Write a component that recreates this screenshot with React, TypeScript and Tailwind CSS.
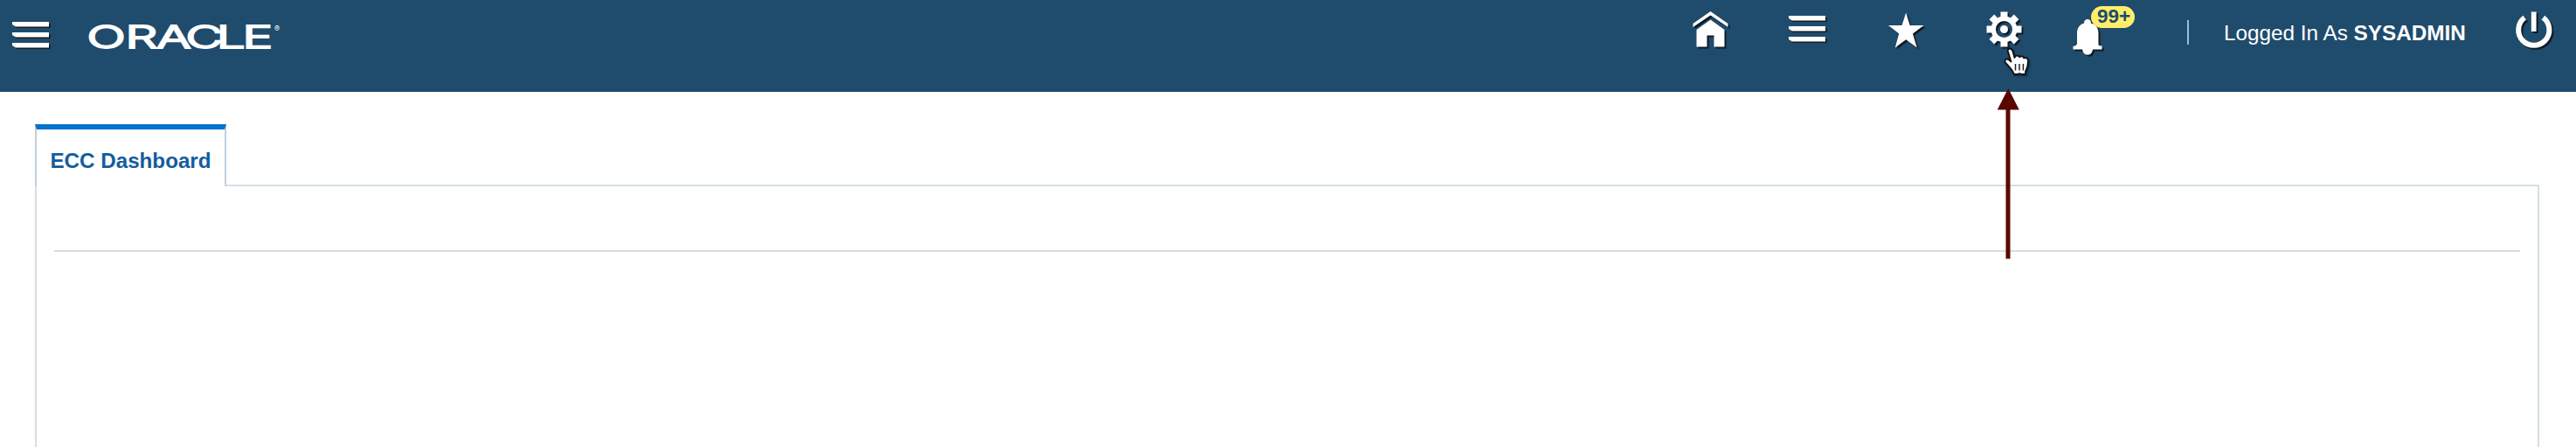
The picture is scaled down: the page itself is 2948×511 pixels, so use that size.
import React from "react";

const shadow = "[filter:drop-shadow(2px_2px_0.7px_rgba(15,20,25,0.9))] shrink-0 overflow-visible";

function MenuIcon({ className = "" }: { className?: string }) {
  return (
    <svg className={`h-[32px] w-[44px] shrink-0 overflow-visible ${className}`} viewBox="0 0 44 32">
      {[0, 12, 24].map((y) => (
        <g key={y}>
          <path d={`M1 ${y + 3}L4.5 ${y + 8}H43.6V${y + 3}Z`} fill="#15191d" />
          <path d={`M0 ${y + 1}H42V${y + 6.5}H4L0 ${y + 4}Z`} fill="#fff" />
        </g>
      ))}
    </svg>
  );
}

function HomeIcon() {
  return (
    <svg className={`h-[42px] w-[42px] ${shadow}`} viewBox="0 0 42 42">
      <path d="M20.5 0L40.5 14V18L20.5 4.5L.5 18V14Z" fill="#fff" />
      <path d="M20.5 9.5L36.5 21V40.5H24.5V27.5H16.5V40.5H4.5V21Z" fill="#fff" />
    </svg>
  );
}

function StarIcon() {
  return (
    <svg className={`h-[41px] w-[41px] ${shadow}`} viewBox="0 0 41 41">
      <path d="M20.2 .5L24.8 15H40.5L28 24.5L32.8 40.5L20.2 31.3L7.8 40.5L12.2 24.5L0 15H15.6Z" fill="#fff" />
    </svg>
  );
}

function GearIcon() {
  return (
    <svg className={`h-[41px] w-[41px] ${shadow}`} viewBox="0 0 41 41">
      {[0, 45, 90, 135].map((a) => (
        <g key={a} transform={`rotate(${a} 20.5 20.5)`} fill="#fff">
          <rect x="16.5" y="0.5" width="8" height="9" />
          <rect x="16.5" y="31.5" width="8" height="9" />
        </g>
      ))}
      <circle cx="20.5" cy="20.5" r="12.2" fill="none" stroke="#fff" strokeWidth="5.4" />
      <circle cx="20.5" cy="20.5" r="4.5" fill="#fff" />
    </svg>
  );
}

function BellIcon() {
  return (
    <svg className={`h-[42px] w-[34px] ${shadow}`} viewBox="0 0 34 42">
      <path d="M17 0C19.5 0 21 1.5 21 4.5C26.5 6 29.5 10 29.5 16V29C30 30 31 30.5 33.5 30.5V34.5H.5V31C3 30.5 5 29.5 5 28V16C5 10 8 6 13 4.5C13 1.5 14.5 0 17 0Z" fill="#fff" />
      <path d="M11 34H23C22.5 38 20.5 40.7 17 40.7C13.5 40.7 11.5 38 11 34Z" fill="#fff" />
    </svg>
  );
}

function PowerIcon() {
  return (
    <svg className={`h-[42px] w-[42px] ${shadow}`} viewBox="0 0 42 42">
      <path d="M10.2 7.2A17.6 17.6 0 1 0 31.4 7.2" fill="none" stroke="#fff" strokeWidth="6" />
      <path d="M17.8 .5H23.6V23H17.8Z" fill="#fff" />
    </svg>
  );
}

function PointerCursor() {
  return (
    <svg
      className="absolute left-[20px] top-[41px] h-[34px] w-[32px] overflow-visible [filter:drop-shadow(1px_1px_1px_rgba(0,0,0,0.5))]"
      viewBox="0 0 32 34"
    >
      <path
        d="M7 1.5C9 1.5 10 3 10.5 5L12.5 12C13.5 9.2 17 9 18 11.2C20 9.5 22.5 10.5 23.2 12.5C26 11.2 28 13 28 16C28 22 26.5 25 25 28V31H20.5L18 30L15.5 31H12C10 25.5 5 21 2 17.5C.5 15 2.5 12.5 5.5 14L8.5 16.5L5 5C4.5 3 5.2 1.5 7 1.5Z"
        fill="#fff"
        stroke="#111"
        strokeWidth="1.8"
        strokeLinejoin="round"
      />
      <path d="M13.5 19V26.5M18 19V26.5M22.4 19V26.5" stroke="#222" strokeWidth="1.5" />
    </svg>
  );
}

function OracleLogo() {
  return (
    <svg className="ml-[44px] mt-[24px] h-[36px] w-[222px] shrink-0 overflow-visible" viewBox="0 0 222 36" fill="#fff">
      <text
        transform="scale(1.65 1)"
        x="-1.5 25.2 46.8 67 88.4 106.3"
        y="30.9"
        stroke="#fff"
        strokeWidth="1.9"
        className="font-['Inter',sans-serif] text-[35.3px] font-light"
      >
        ORACLE
      </text>
      <text x="212" y="11.5" className="font-['Inter',sans-serif] text-[9px]">®</text>
    </svg>
  );
}

export default function App() {
  return (
    <div className="relative flex h-[511px] w-full flex-col overflow-hidden bg-white font-['Liberation_Sans',Arial,sans-serif]">
      <header className="flex h-[105px] shrink-0 items-start bg-[#1f4b6d] pl-[14px] text-white">
        <MenuIcon className="mt-[24px]" />
        <OracleLogo />
        <div className="ml-auto flex items-start pr-[27px]">
          <div className="mt-[13px]"><HomeIcon /></div>
          <MenuIcon className="ml-[68px] mt-[17px]" />
          <div className="ml-[70px] mt-[14px]"><StarIcon /></div>
          <div className="relative ml-[71px] mt-[13px]">
            <GearIcon />
            <PointerCursor />
          </div>
          <div className="relative ml-[58px] mt-[22px]">
            <BellIcon />
            <span className="absolute -top-[15px] left-[21px] flex h-[25px] w-[50px] items-center justify-center rounded-full bg-[#ffee69] pl-[2px] text-[22.5px] font-bold leading-none text-[#1f4b6d]">
              99+
            </span>
          </div>
          <div className="ml-[97px] mt-[23px] h-[28px] w-[2px] bg-[#94bfe4]" />
          <div className="ml-[40px] mt-[24px] w-[276px] whitespace-nowrap text-[24.3px] leading-[28px]">
            Logged In As <b>SYSADMIN</b>
          </div>
          <div className="ml-[58px] mt-[13px]"><PowerIcon /></div>
        </div>
      </header>

      <main className="mt-[37px] flex min-h-0 flex-1 flex-col pl-[40px] pr-[42px]">
        <div className="flex h-[71px] shrink-0">
          <div className="flex w-[219px] justify-center border-x-2 border-t-[6px] border-x-[#c1ced9] border-t-[#0572ce] pt-[22px] text-[24.2px] font-bold leading-[28px] text-[#145c9e]">
            <span className="whitespace-nowrap">ECC Dashboard</span>
          </div>
          <div className="flex-1 self-end border-r-2 border-t-2 border-[#d4dfe6]" />
        </div>
        <section className="flex-1 border-x-2 border-[#d4dfe6] px-[20px] pt-[73px]">
          <div className="h-[2px] bg-[#d4dfe6]" />
        </section>
      </main>

      <svg className="absolute left-[2285px] top-[101px] h-[195px] w-[27px]" viewBox="0 0 27 195">
        <path d="M13.3 0L25.8 24.5H15.5V194.7H10.5V24.5H.8Z" fill="#5a0700" />
      </svg>
    </div>
  );
}
